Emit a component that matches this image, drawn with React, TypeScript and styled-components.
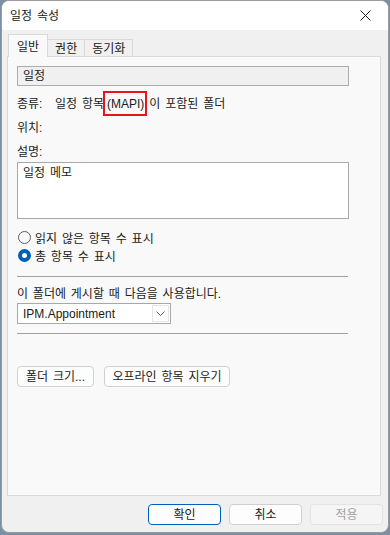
import React from "react";
import styled, { createGlobalStyle } from "styled-components";

const GlobalStyle = createGlobalStyle`
  html, body {
    margin: 0;
    padding: 0;
  }
  body {
    background: #7b90a4;
    font-family: "Liberation Sans", "Noto Sans CJK KR", sans-serif;
    font-size: 12px;
    word-spacing: 1.5px;
    color: #1a1a1a;
  }
`;

const Window = styled.div`
  margin-left: 1px;
  width: 388px;
  height: 533px;
  box-sizing: border-box;
  border: 1px solid #9c9c9c;
  border-radius: 8px;
  overflow: hidden;
  display: flex;
  flex-direction: column;
  background: #f0f0f0;
`;

const TitleBar = styled.div`
  height: 29px;
  background: #ffffff;
  display: flex;
  align-items: center;
  justify-content: space-between;
  padding-left: 8px;
`;

const Title = styled.span`
  font-size: 12px;
  line-height: 16px;
`;

const CloseBtn = styled.div`
  width: 46px;
  height: 29px;
  display: flex;
  align-items: center;
  justify-content: center;
`;

const Body = styled.div`
  flex: 1;
  display: flex;
  flex-direction: column;
  padding: 5px 7px 0 5px;
`;

const TabRow = styled.div`
  display: flex;
  align-items: flex-end;
  height: 22px;
  padding-left: 1px;
  margin-bottom: -1px;
  position: relative;
  z-index: 1;
`;

const Tab = styled.div<{ $active?: boolean }>`
  box-sizing: border-box;
  height: ${(p) => (p.$active ? "23px" : "18px")};
  padding: ${(p) => (p.$active ? "2px 8px 0" : "2px 7px 0")};
  margin-left: ${(p) => (p.$active ? "0" : "-1px")};
  display: flex;
  align-items: center;
  background: ${(p) => (p.$active ? "#f9f9f9" : "#f0f0f0")};
  border: 1px solid #d9d9d9;
  border-bottom: ${(p) => (p.$active ? "none" : "1px solid #d9d9d9")};
  line-height: 16px;
  &:first-child {
    margin-left: 0;
  }
`;

const Panel = styled.div`
  height: 440px;
  box-sizing: border-box;
  background: #f9f9f9;
  border: 1px solid #d9d9d9;
  padding: 9px 0 0 9px;
  display: flex;
  flex-direction: column;
`;

const NameBox = styled.div`
  width: 332px;
  height: 20px;
  box-sizing: border-box;
  background: #f0f0f0;
  border: 1px solid #adadad;
  padding-left: 5px;
  display: flex;
  align-items: center;
  line-height: 16px;
`;

const Row = styled.div<{ $mt: number }>`
  display: flex;
  align-items: center;
  height: 16px;
  line-height: 16px;
  margin-top: ${(p) => p.$mt}px;
`;

const Label = styled.span`
  width: 38px;
  flex-shrink: 0;
`;

const Marked = styled.span`
  border: 2px solid #e8141c;
  padding: 4px 1px 3px 2px;
  margin: 0 2px 0 -1px;
`;

const Memo = styled.div`
  margin-top: 2px;
  width: 332px;
  height: 57px;
  box-sizing: border-box;
  background: #ffffff;
  border: 1px solid #a8a8a8;
  padding: 2px 5px;
  line-height: 16px;
`;

const RadioRow = styled.label<{ $mt: number }>`
  display: flex;
  align-items: center;
  gap: 4px;
  height: 17px;
  margin-top: ${(p) => p.$mt}px;
`;

const RadioDot = styled.span<{ $on?: boolean }>`
  width: 13px;
  height: 13px;
  box-sizing: border-box;
  border-radius: 50%;
  flex-shrink: 0;
  margin-left: 1px;
  background: ${(p) => (p.$on ? "#ffffff" : "#f9f9f9")};
  border: ${(p) => (p.$on ? "4px solid #005fb8" : "1px solid #5a5a5a")};
`;

const Separator = styled.div<{ $mt: number }>`
  width: 331px;
  height: 1px;
  background: #a0a0a0;
  margin-top: ${(p) => p.$mt}px;
`;

const Combo = styled.div`
  margin-top: 1px;
  width: 154px;
  height: 21px;
  box-sizing: border-box;
  background: #ffffff;
  border: 1px solid #a8a8a8;
  display: flex;
  align-items: center;
  justify-content: space-between;
  padding: 1px 1px 1px 5px;
`;

const ComboArrow = styled.div`
  width: 17px;
  height: 17px;
  box-sizing: border-box;
  border: 1px solid #e6e6e6;
  display: flex;
  align-items: center;
  justify-content: center;
`;

const ButtonRow = styled.div<{ $mt: number }>`
  display: flex;
  gap: 10px;
  margin-top: ${(p) => p.$mt}px;
`;

const Button = styled.div<{ $variant?: "default" | "disabled"; $w?: number }>`
  box-sizing: border-box;
  height: 21px;
  ${(p) => (p.$w ? `width: ${p.$w}px;` : "padding: 0 7px;")}
  display: flex;
  align-items: center;
  justify-content: center;
  border-radius: 4px;
  line-height: 16px;
  background: ${(p) => (p.$variant === "disabled" ? "#f5f5f5" : "#fdfdfd")};
  border: 1px solid
    ${(p) =>
      p.$variant === "default"
        ? "#005fb8"
        : p.$variant === "disabled"
        ? "#e3e3e3"
        : "#d0d0d0"};
  color: ${(p) => (p.$variant === "disabled" ? "#a2a2a2" : "#1a1a1a")};
`;

const Footer = styled.div`
  display: flex;
  justify-content: flex-end;
  gap: 8px;
  padding: 8px 0 0 0;
  margin-right: -2px;
`;

export default function App() {
  return (
    <>
      <GlobalStyle />
      <Window>
        <TitleBar>
          <Title>일정 속성</Title>
          <CloseBtn>
            <svg width="11" height="11" viewBox="0 0 11 11">
              <path d="M0.5 0.5 L10.5 10.5 M10.5 0.5 L0.5 10.5" stroke="#1a1a1a" strokeWidth="1" fill="none" />
            </svg>
          </CloseBtn>
        </TitleBar>
        <Body>
          <TabRow>
            <Tab $active>일반</Tab>
            <Tab>권한</Tab>
            <Tab>동기화</Tab>
          </TabRow>
          <Panel>
            <NameBox>일정</NameBox>
            <Row $mt={10}>
              <Label>종류:</Label>
              <span>
                일정 항목<Marked>(MAPI)</Marked>이 포함된 폴더
              </span>
            </Row>
            <Row $mt={8}>
              <Label>위치:</Label>
            </Row>
            <Row $mt={8}>
              <Label>설명:</Label>
            </Row>
            <Memo>일정 메모</Memo>
            <RadioRow $mt={10}>
              <RadioDot />
              읽지 않은 항목 수 표시
            </RadioRow>
            <RadioRow $mt={1}>
              <RadioDot $on />
              총 항목 수 표시
            </RadioRow>
            <Separator $mt={12} />
            <Row $mt={9}>이 폴더에 게시할 때 다음을 사용합니다.</Row>
            <Combo>
              <span>IPM.Appointment</span>
              <ComboArrow>
                <svg width="9" height="5" viewBox="0 0 9 5">
                  <path d="M0.5 0.5 L4.5 4.5 L8.5 0.5" stroke="#606060" strokeWidth="1" fill="none" />
                </svg>
              </ComboArrow>
            </Combo>
            <Separator $mt={9} />
            <ButtonRow $mt={32}>
              <Button $w={77}>폴더 크기...</Button>
              <Button $w={126}>오프라인 항목 지우기</Button>
            </ButtonRow>
          </Panel>
          <Footer>
            <Button $variant="default" $w={73}>확인</Button>
            <Button $w={73}>취소</Button>
            <Button $variant="disabled" $w={73}>적용</Button>
          </Footer>
        </Body>
      </Window>
    </>
  );
}
